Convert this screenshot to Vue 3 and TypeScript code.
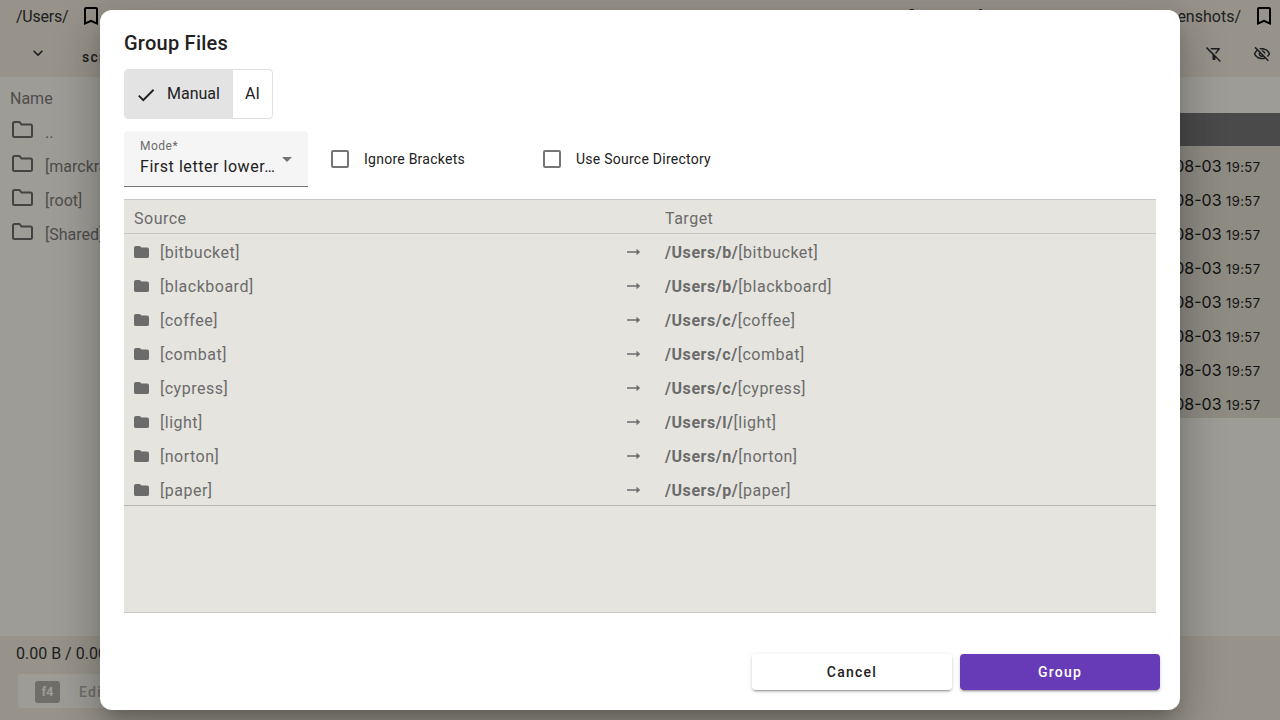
<script setup lang="ts">
interface Entry {
  name: string
  dir: string
}

const entries: Entry[] = [
  { name: '[bitbucket]', dir: '/Users/b/' },
  { name: '[blackboard]', dir: '/Users/b/' },
  { name: '[coffee]', dir: '/Users/c/' },
  { name: '[combat]', dir: '/Users/c/' },
  { name: '[cypress]', dir: '/Users/c/' },
  { name: '[light]', dir: '/Users/l/' },
  { name: '[norton]', dir: '/Users/n/' },
  { name: '[paper]', dir: '/Users/p/' },
]

const leftFiles: string[] = ['..', '[marckraw]', '[root]', '[Shared]']
const options: string[] = ['Ignore Brackets', 'Use Source Directory']
</script>

<template>
  <div class="screen">
    <div class="commander">
      <section class="panel">
        <div class="path">
          <span>/Users/</span>
          <svg class="bookmark" viewBox="0 0 24 24"><path d="M17 3H7c-1.100 0-2 .9-2 2v16l7-3 7 3V5c0-1.100-.9-2-2-2zm0 15-5-2.180L7 18V5h10v13z" /></svg>
        </div>
        <div class="tabs">
          <svg class="chevron" viewBox="0 0 24 24"><path d="M7.410 8.590 12 13.170l4.590-4.580L18 10l-6 6-6-6z" /></svg>
          <span class="tab">scr</span>
        </div>
        <div class="files">
          <div class="head">Name</div>
          <div v-for="file in leftFiles" :key="file" class="file">
            <svg viewBox="0 0 21 17"><path d="M2.500 1h5l2 2.500h9A1.500 1.500 0 0 1 20 5v9.500a1.500 1.500 0 0 1-1.500 1.500h-16A1.500 1.500 0 0 1 1 14.500v-12A1.500 1.500 0 0 1 2.500 1z" /></svg>
            <span>{{ file }}</span>
          </div>
        </div>
        <div class="status">0.00 B / 0.00 B</div>
        <div class="keys">
          <div class="key"><kbd>f4</kbd><span>Edit</span></div>
        </div>
      </section>
      <section class="panel right">
        <div class="path">
          <span>/Users/marckraw/projects/tools/files/and/folders/documentation/screenshots/</span>
          <svg class="bookmark" viewBox="0 0 24 24"><path d="M17 3H7c-1.100 0-2 .9-2 2v16l7-3 7 3V5c0-1.100-.9-2-2-2zm0 15-5-2.180L7 18V5h10v13z" /></svg>
        </div>
        <div class="tabs">
          <svg class="tool" viewBox="0 0 24 24"><path d="M16.950 6l-3.570 4.550 1.430 1.430c1.030-1.310 4.980-6.370 4.980-6.370A.998.998 0 0 0 19 4H6.830l2 2h8.120zM2.810 2.810 1.390 4.220 10 13v6c0 .55.45 1 1 1h2c.55 0 1-.45 1-1v-2.170l5.780 5.780 1.410-1.410L2.810 2.810z" /></svg>
          <svg class="tool" viewBox="0 0 24 24"><path d="M12 6c3.790 0 7.170 2.130 8.820 5.500-.59 1.220-1.420 2.270-2.410 3.120l1.410 1.410c1.390-1.230 2.490-2.770 3.180-4.530C21.270 7.110 17 4 12 4c-1.270 0-2.490.2-3.640.57l1.650 1.650C10.660 6.090 11.320 6 12 6zm-1.070 1.140L13 9.210c.57.25 1.030.71 1.280 1.280l2.070 2.070c.08-.34.14-.7.140-1.070C16.500 9.010 14.480 7 12 7c-.37 0-.72.050-1.070.14zM2.010 3.870l2.680 2.680C3.060 7.830 1.770 9.530 1 11.500 2.730 15.890 7 19 12 19c1.520 0 2.980-.29 4.320-.82l3.420 3.420 1.410-1.410L3.420 2.450 2.010 3.870zm7.500 7.500 2.610 2.610c-.04.010-.08.020-.12.020-1.380 0-2.500-1.120-2.500-2.500 0-.05.010-.08.010-.13zm-3.400-3.400 1.750 1.750c-.23.550-.36 1.150-.36 1.780 0 2.480 2.020 4.500 4.500 4.500.63 0 1.230-.13 1.770-.36l.98.98c-.88.240-1.800.38-2.750.38-3.790 0-7.170-2.130-8.820-5.500.7-1.430 1.720-2.610 2.930-3.530z" /></svg>
        </div>
        <div class="files">
          <div class="head"></div>
          <div class="selected"></div>
          <div v-for="n in 8" :key="n" class="dated">2023-08-03&nbsp;<small>19:57</small></div>
        </div>
        <div class="status"></div>
        <div class="keys"></div>
      </section>
    </div>

    <main class="dialog">
      <h1>Group Files</h1>
      <div class="toggle">
        <div class="choice active">
          <svg viewBox="0 0 24 24"><path d="M9 16.170 4.830 12l-1.420 1.410L9 19 21 7l-1.410-1.410z" /></svg>
          <span>Manual</span>
        </div>
        <div class="choice">AI</div>
      </div>
      <div class="form">
        <div class="select">
          <div class="value">
            <label>Mode*</label>
            <span>First letter lower…</span>
          </div>
          <i class="caret"></i>
        </div>
        <div v-for="option in options" :key="option" class="check">
          <i class="box"></i><span>{{ option }}</span>
        </div>
      </div>
      <div class="table">
        <div class="row header"><span class="source">Source</span><span class="target">Target</span></div>
        <div class="body">
          <div v-for="entry in entries" :key="entry.name" class="row">
            <span class="source">
              <svg class="folder" viewBox="0 0 16 14"><path d="M2 .5h3.600c.5 0 .9.2 1.200.5L8.100 2.300H14a2 2 0 0 1 2 2V11.500a2 2 0 0 1-2 2H2a2 2 0 0 1-2-2v-9a2 2 0 0 1 2-2z" /></svg>
              {{ entry.name }}
            </span>
            <svg class="arrow" viewBox="0 0 14 8"><path d="M0 3.200h9.500V.8L13.200 4 9.500 7.200V4.800H0z" /></svg>
            <span class="target"><b>{{ entry.dir }}</b>{{ entry.name }}</span>
          </div>
        </div>
      </div>
      <div class="actions">
        <button>Cancel</button>
        <button class="primary">Group</button>
      </div>
    </main>
  </div>
</template>

<style>
body {
  margin: 0;
  overflow: hidden;
}
</style>

<style scoped>
.screen {
  position: relative;
  width: 1280px;
  height: 720px;
  overflow: hidden;
  background: #97938a;
  font: 16px/24px Roboto, sans-serif;
  color: #1d1e22;
}
.screen * { box-sizing: border-box; }
.commander { display: flex; height: 720px; }
.panel { width: 640px; display: flex; flex-direction: column; }
.path {
  height: 33px;
  padding: 0 0 1px 16px;
  display: flex;
  align-items: center;
  gap: 11px;
  white-space: nowrap;
}
.path span { padding-top: 2px; }
.panel:not(.right) .path span { letter-spacing: -.25px; }
.bookmark { width: 24px; height: 24px; fill: #000; }
.path .bookmark { flex: none; }
.right .path { justify-content: flex-end; padding-right: 4px; }
.tabs { height: 44px; display: flex; align-items: center; padding-left: 28px; }
.chevron { width: 20px; height: 20px; fill: #1d1e22; margin-bottom: 4px; }
.tab { margin: 4px 0 0 34px; font: 500 14px/20px Roboto, sans-serif; letter-spacing: 1.25px; }
.right .tabs { justify-content: flex-end; gap: 30px; padding: 0 9px 2px 0; }
.tool { width: 18px; height: 18px; fill: #1d1e22; }
.files { height: 559px; background: #9e9c97; color: #4e4d4b; }
.head { height: 36px; padding: 10px 10px 0; }
.file { height: 34px; display: flex; align-items: center; padding: 0 0 0 11.5px; gap: 12.5px; }
.file svg { width: 21px; height: 17px; margin-bottom: 1px; fill: none; stroke: #444341; stroke-width: 2; }
.file span { padding-top: 5px; }
.selected { height: 33px; background: #4a4a4a; }
.dated {
  height: 34px;
  padding: 8px 20px 0 0;
  background: #8d8b82;
  color: #111;
  text-align: right;
  font-family: Inter, sans-serif;
}
.dated small { font-size: 13px; letter-spacing: .4px; margin-right: -.4px; }
.status { height: 38px; padding: 6px 16px 0; }
.keys { padding-left: 18px; }
.key {
  width: 180px;
  height: 34px;
  padding: 1px 0 0 17px;
  display: flex;
  align-items: center;
  gap: 19px;
  border-radius: 3px;
  background: #9e9c97;
  color: #706e6a;
  font-weight: 500;
  font-size: 14px;
  letter-spacing: 1.25px;
}
kbd {
  width: 25px;
  height: 22px;
  border-radius: 3px;
  background: #706e69;
  color: #9e9c97;
  font: 700 13px/22px Roboto, sans-serif;
  letter-spacing: 0;
  text-align: center;
}
.dialog {
  position: absolute;
  left: 100px;
  top: 10px;
  width: 1080px;
  height: 700px;
  padding: 17px 20px 20px 24px;
  border-radius: 12px;
  background: #fff;
  box-shadow: 0 11px 15px -7px rgba(0, 0, 0, .2), 0 24px 38px 3px rgba(0, 0, 0, .14), 0 9px 46px 8px rgba(0, 0, 0, .12);
  color: #212121;
}
h1 { margin: 0; font: 500 20px/32px Roboto, sans-serif; letter-spacing: .25px; }
.toggle {
  width: 149px;
  height: 50px;
  margin-top: 10px;
  display: flex;
  border: 1px solid #e0e0e0;
  border-radius: 4px;
  overflow: hidden;
}
.choice { padding: 0 12px; line-height: 48px; }
.choice.active {
  width: 108px;
  display: flex;
  align-items: center;
  gap: 10px;
  padding: 0 0 0 10px;
  background: #e3e3e3;
  border-right: 1px solid #e0e0e0;
}
.choice svg { width: 22px; height: 22px; margin-top: 2px; flex: none; fill: #212121; }
.form { display: flex; height: 56px; margin-top: 12px; }
.select {
  width: 184px;
  padding: 6px 16px 0;
  display: flex;
  justify-content: space-between;
  border-radius: 4px 4px 0 0;
  border-bottom: 1px solid #757575;
  background: #f5f5f5;
}
.value { width: 137px; display: flex; flex-direction: column; white-space: nowrap; }
.value label { font-size: 12px; line-height: 18px; letter-spacing: .5px; color: #6b6b6b; }
.value span { letter-spacing: .55px; }
.caret { margin-top: 20px; border: 5px solid transparent; border-top-color: #757575; border-bottom: 0; height: 5px; }
.check {
  width: 212px;
  padding-left: 23px;
  display: flex;
  align-items: center;
  gap: 15px;
  font-size: 14px;
  letter-spacing: .25px;
}
.box { width: 18px; height: 18px; border: 2px solid #757575; border-radius: 2px; }
.table {
  width: 1032px;
  height: 414px;
  margin-top: 12px;
  border-top: 1px solid #c8c8c6;
  border-bottom: 1px solid #c8c8c6;
  background: #e5e4df;
  color: #6b6b6b;
  letter-spacing: .5px;
}
.row { height: 34px; display: flex; padding: 2px 10px 0; line-height: 34px; }
.source { width: 492px; height: 34px; display: flex; align-items: center; gap: 11px; }
.header { border-bottom: 1px solid #c8c8c6; }
.header .source { width: 531px; }
.body { height: 272px; border-bottom: 1px solid #b6b6b3; }
.folder { width: 15px; height: 14px; margin-top: -2px; fill: #6b6b6b; }
.arrow { width: 14px; height: 8px; margin: 12px 24.500px 0 .5px; fill: #6b6b6b; }
.target b { letter-spacing: .56px; }
.actions { display: flex; justify-content: flex-end; gap: 8px; margin-top: 41px; }
button {
  width: 200px;
  height: 36px;
  padding: 0;
  border: 0;
  border-radius: 4px;
  background: #fff;
  color: #212121;
  font: 500 14px/36px Roboto, sans-serif;
  letter-spacing: 1.25px;
  box-shadow: 0 3px 1px -2px rgba(0, 0, 0, .2), 0 2px 2px rgba(0, 0, 0, .14), 0 1px 5px rgba(0, 0, 0, .12);
}
.primary { background: #673ab7; color: #fff; }
</style>
